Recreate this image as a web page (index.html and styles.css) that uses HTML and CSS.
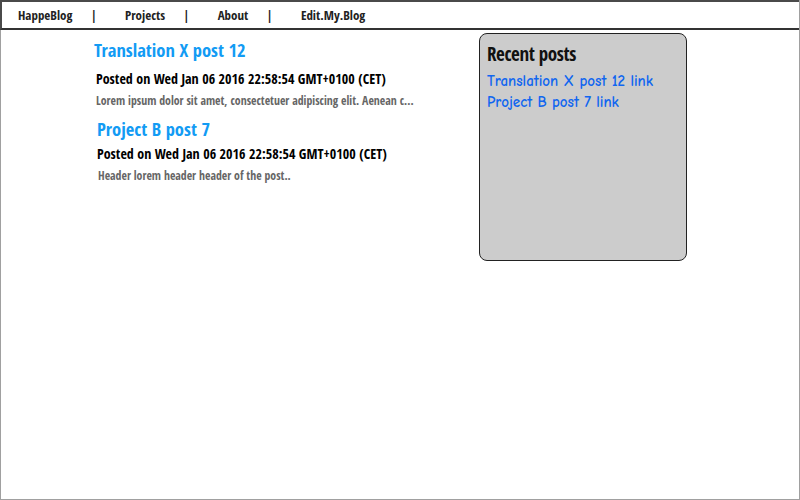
FILE: index.html
```html
<!DOCTYPE html>
<html>
<head>
<meta charset="utf-8">
<link rel="stylesheet" href="styles.css">
</head>
<body>
<div class="frame">
  <nav class="nav">
    <span class="nav-item">HappeBlog</span>
    <span class="sep">|</span>
    <span class="nav-item">Projects</span>
    <span class="sep">|</span>
    <span class="nav-item">About</span>
    <span class="sep">|</span>
    <span class="nav-item">Edit.My.Blog</span>
  </nav>
  <div class="content">
    <main class="posts">
      <article class="post post-1">
        <h2 class="post-title">Translation X post 12</h2>
        <div class="post-meta">Posted on Wed Jan 06 2016 22:58:54 GMT+0100 (CET)</div>
        <p class="post-excerpt">Lorem ipsum dolor sit amet, consectetuer adipiscing elit. Aenean c...</p>
      </article>
      <article class="post post-2">
        <h2 class="post-title">Project B post 7</h2>
        <div class="post-meta">Posted on Wed Jan 06 2016 22:58:54 GMT+0100 (CET)</div>
        <p class="post-excerpt">Header lorem header header of the post..</p>
      </article>
    </main>
    <aside class="sidebar">
      <h3 class="sidebar-title">Recent posts</h3>
      <a class="sidebar-link">Translation X post 12 link</a>
      <a class="sidebar-link">Project B post 7 link</a>
    </aside>
  </div>
</div>
</body>
</html>
```
FILE: styles.css
```css
html, body {
  margin: 0;
  padding: 0;
}
body {
  width: 800px;
  height: 500px;
  background: #fff;
  font-family: "Open Sans Condensed", "Roboto Condensed", "DejaVu Sans Condensed", sans-serif;
  font-weight: bold;
}
.frame {
  box-sizing: border-box;
  width: 800px;
  height: 500px;
  border: 1px solid #a0a0a0;
  border-top: none;
}
.nav {
  box-sizing: border-box;
  height: 30px;
  margin-left: -1px;
  border-top: 2px solid #4a4a4a;
  border-left: 2px solid #4a4a4a;
  border-bottom: 2px solid #333;
  display: flex;
  align-items: center;
  padding-left: 16px;
  padding-bottom: 1px;
  font-size: 13px;
  color: #222;
}
.sep {
  margin: 0 28px 0 18px;
}
.content {
  display: flex;
  padding-top: 3px;
}
.posts {
  width: 385px;
  padding-left: 93px;
}
.post-title {
  margin: 5px 0 0;
  font-size: 18.5px;
  font-weight: bold;
  color: #129bf4;
  line-height: 24px;
}
.post-2 .post-title {
  margin-left: 3px;
  margin-top: 9px;
}
.post-meta {
  margin: 8px 0 0 2px;
  font-size: 14px;
  color: #000;
  line-height: 18px;
}
.post-2 .post-meta {
  margin-left: 3px;
  margin-top: 4px;
}
.post-excerpt {
  margin: 4px 0 0 2px;
  font-size: 11.8px;
  color: #666;
  line-height: 16px;
}
.post-2 .post-excerpt {
  margin-left: 4px;
  margin-top: 4px;
}
.sidebar {
  box-sizing: border-box;
  width: 208px;
  height: 228px;
  background: #cccccc;
  border: 1px solid #222;
  border-radius: 8px;
  padding: 7px 7px;
  display: flex;
  flex-direction: column;
}
.sidebar-title {
  margin: 0 0 4px;
  font-size: 19px;
  letter-spacing: -0.4px;
  color: #111;
  line-height: 26px;
}
.sidebar-link {
  font-family: "Comic Neue", "Comic Sans MS", cursive;
  font-weight: bold;
  font-size: 15px;
  color: #1066f0;
  line-height: 21px;
}
```
